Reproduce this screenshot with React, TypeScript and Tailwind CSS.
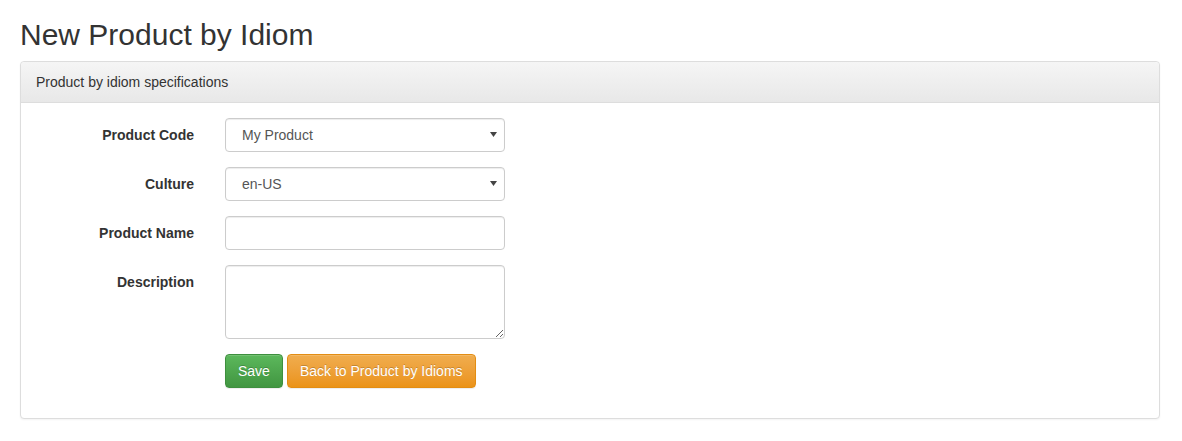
import React from 'react';

/**
 * Labeled row in the horizontal form
 */
const FormRow: React.FC<{ label: string; children: React.ReactNode }> = ({ label, children }) => (
  <div className="flex items-start mb-[15px]">
    <label className="w-[158px] pt-[7px] text-right text-[14px] leading-[20px] font-bold text-[#333]">
      {label}
    </label>
    <div className="ml-[31px] w-[280px]">{children}</div>
  </div>
);

const inputClass =
  'block w-full h-[34px] px-3 py-[6px] text-[14px] leading-[20px] text-[#555] bg-white border border-[#ccc] rounded-[4px] shadow-[inset_0_1px_1px_rgba(0,0,0,0.075)] outline-none';

const Select: React.FC<{ value: string }> = ({ value }) => (
  <div className="relative">
    <select className={`${inputClass} appearance-none pl-4`} defaultValue={value}>
      <option>{value}</option>
    </select>
    <span className="pointer-events-none absolute right-[8px] top-[14px]">
      <svg width="7" height="5" viewBox="0 0 7 5">
        <path d="M0 0h7L3.5 5z" fill="#444" />
      </svg>
    </span>
  </div>
);

export default function App() {
  return (
    <div className="min-h-screen bg-white pl-5 pr-[22px] pt-[18px] text-[#333]" style={{ fontFamily: '"Liberation Sans", Arial, sans-serif' }}>
      <h1 className="text-[30px] leading-[33px] font-normal text-[#333] mb-[10px]">New Product by Idiom</h1>

      <div className="border border-[#ddd] rounded-[4px] bg-white shadow-[0_1px_2px_rgba(0,0,0,0.05)]">
        <div className="px-[15px] py-[10px] text-[14px] leading-[20px] text-[#333] border-b border-[#ddd] rounded-t-[4px] bg-gradient-to-b from-[#f5f5f5] to-[#e8e8e8]">
          Product by idiom specifications
        </div>

        <div className="p-[15px]">
          <FormRow label="Product Code">
            <Select value="My Product" />
          </FormRow>
          <FormRow label="Culture">
            <Select value="en-US" />
          </FormRow>
          <FormRow label="Product Name">
            <input type="text" className={inputClass} />
          </FormRow>
          <FormRow label="Description">
            <textarea rows={3} className={`${inputClass} h-[74px] resize-y`} />
          </FormRow>

          <div className="flex items-start mb-[15px]">
            <div className="ml-[189px] flex gap-[4px]">
              <button className="h-[34px] px-3 text-[14px] leading-[20px] text-white rounded-[4px] border border-[#3e8f3e] bg-gradient-to-b from-[#5cb85c] to-[#419641] [text-shadow:0_-1px_0_rgba(0,0,0,0.2)] shadow-[inset_0_1px_0_rgba(255,255,255,0.15),0_1px_1px_rgba(0,0,0,0.075)]">
                Save
              </button>
              <button className="h-[34px] px-3 text-[14px] leading-[20px] text-white rounded-[4px] border border-[#e38d13] bg-gradient-to-b from-[#f0ad4e] to-[#eb9316] [text-shadow:0_-1px_0_rgba(0,0,0,0.2)] shadow-[inset_0_1px_0_rgba(255,255,255,0.15),0_1px_1px_rgba(0,0,0,0.075)]">
                Back to Product by Idioms
              </button>
            </div>
          </div>
        </div>
      </div>
    </div>
  );
}
